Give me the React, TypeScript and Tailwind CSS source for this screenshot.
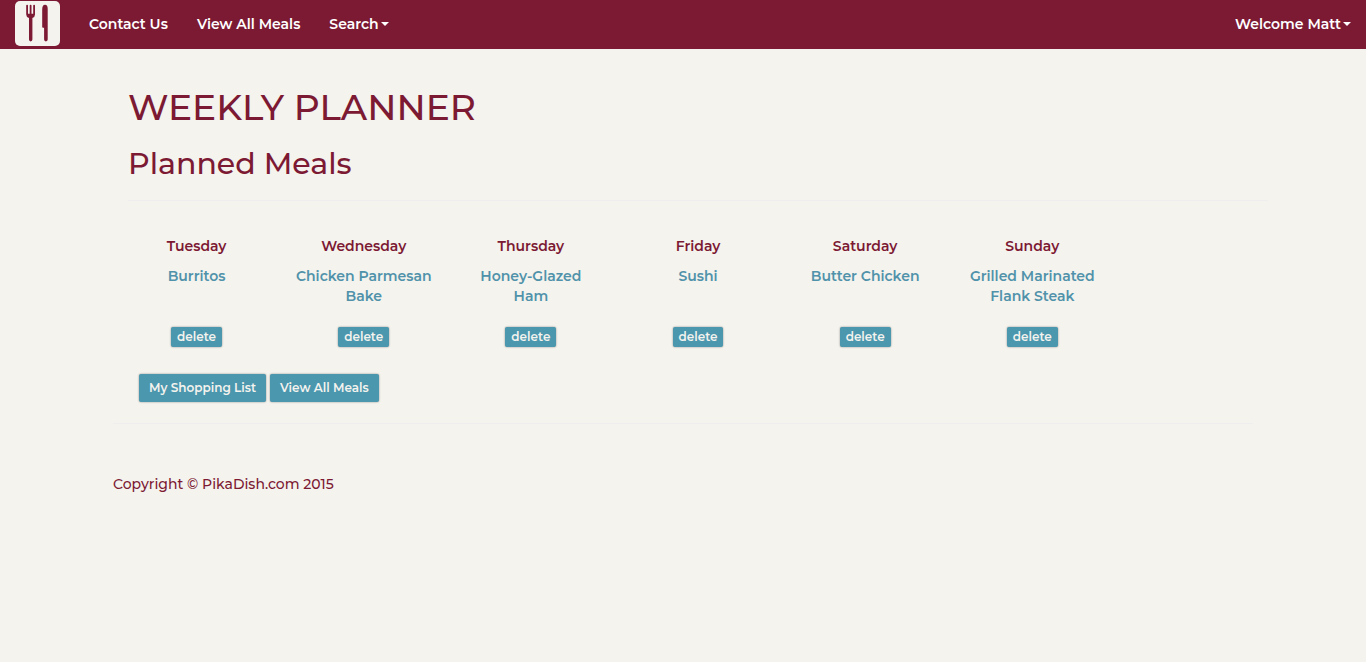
type Meal = { day: string; name: string };

const meals: Meal[] = [
  { day: "Tuesday", name: "Burritos" },
  { day: "Wednesday", name: "Chicken Parmesan Bake" },
  { day: "Thursday", name: "Honey-Glazed Ham" },
  { day: "Friday", name: "Sushi" },
  { day: "Saturday", name: "Butter Chicken" },
  { day: "Sunday", name: "Grilled Marinated Flank Steak" },
];

function Logo() {
  return (
    <svg viewBox="0 0 45 45" className="size-[45px]" aria-hidden="true">
      <rect width="45" height="45" rx="5" fill="#f4f3ee" />
      <g fill="#7c1933">
        <path d="M11.200 4.600q0-.9.900-.9t.9.900v8.200h1.700V4.600q0-.9.900-.9t.9.900v8.200h1.700V4.600q0-.9.900-.9t.9.900V13.500q0 2.500-2.600 3.500v21.600q0 1.800-1.700 1.800t-1.700-1.800V17q-2.800-1-2.800-3.500z" />
        <path d="M27.200 26V8.500Q27.200 3.700 30 3.700q2.700 0 2.700 4v30.900q0 1.800-1.800 1.800t-1.800-1.800V26.800H28Q27.200 26.800 27.200 26z" />
      </g>
    </svg>
  );
}

function Caret() {
  return (
    <svg viewBox="0 0 8 4" className="ml-0.5 h-1 w-2" fill="currentColor" aria-hidden="true">
      <path d="M0 0h8L4 4z" />
    </svg>
  );
}

function NavBar() {
  return (
    <nav className="flex h-[49px] items-start justify-between bg-[#7c1933] px-[15px] pt-px text-sm leading-5 font-semibold text-white">
      <div className="flex items-center gap-[29px]">
        <a href="#home" aria-label="PikaDish home">
          <Logo />
        </a>
        <a href="#contact">Contact Us</a>
        <a href="#meals">View All Meals</a>
        <button type="button" className="flex items-center">
          Search
          <Caret />
        </button>
      </div>
      <button type="button" className="flex h-[45px] items-center">
        Welcome Matt
        <Caret />
      </button>
    </nav>
  );
}

function MealColumn({ day, name }: Meal) {
  return (
    <div className="flex flex-col items-center px-[15px] text-center text-sm leading-5 font-semibold">
      <h3>{day}</h3>
      <a href="#meal" className="mt-2.5 h-[51px] text-[#5092aa]">
        {name}
      </a>
      <button
        type="button"
        aria-label={`delete ${name}`}
        className="mt-2.5 rounded-xs bg-[#4b97ae] px-1.5 text-xs leading-5 font-semibold text-[#f4f3ee] shadow-[0_0_2px_rgba(0,0,0,0.45)]"
      >
        delete
      </button>
    </div>
  );
}

const actionClass =
  "rounded-xs bg-[#4b97ae] px-2.5 py-1 text-xs leading-5 font-semibold text-[#f4f3ee] shadow-[0_0_2px_rgba(0,0,0,0.45)]";

export default function App() {
  return (
    <div className="min-h-screen bg-white pr-1 font-['Montserrat','Inter',sans-serif]">
      <div className="min-h-screen bg-[#f4f3ee] text-[#7c1933]">
        <NavBar />
        <div className="mx-auto max-w-[1170px] px-[15px]">
          <main>
            <header className="-mr-[15px] ml-[15px] border-b border-[#eeeeee] pt-[38px] pb-[18px]">
              <h1 className="text-4xl leading-10 font-medium">WEEKLY PLANNER</h1>
              <h2 className="mt-[19px] text-3xl leading-9 font-medium">Planned Meals</h2>
            </header>
            <section aria-label="Planned meals" className="-mr-[30px] grid grid-cols-7 pt-[35px]">
              {meals.map((meal) => (
                <MealColumn key={meal.day} {...meal} />
              ))}
            </section>
            <div className="mt-[27px] ml-[26px] flex gap-1">
              <a href="#shopping-list" className={actionClass}>
                My Shopping List
              </a>
              <a href="#meals" className={actionClass}>
                View All Meals
              </a>
            </div>
          </main>
          <footer className="mt-[21px] border-t border-[#eeeeee] pt-[50px] text-sm leading-5 font-medium">
            <p>Copyright © PikaDish.com 2015</p>
          </footer>
        </div>
      </div>
    </div>
  );
}
